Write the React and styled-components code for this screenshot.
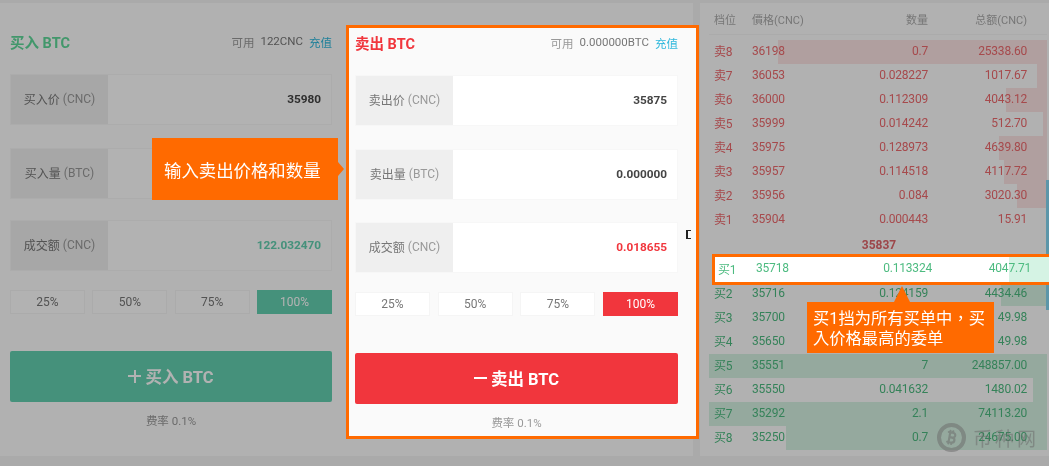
import React from 'react';
import styled, { createGlobalStyle } from 'styled-components';
import { Bitcoin } from 'lucide-react';

const GlobalStyle = createGlobalStyle`
  html, body {
    margin: 0;
    padding: 0;
    background: #f4f4f4;
  }
  * {
    box-sizing: border-box;
  }
`;

const ORANGE = '#ff6a00';
const GREEN = '#64d0b1';
const RED = '#f1363d';
const BUY_TEXT = '#4dbb80';
const SELL_TEXT = '#ee6a6e';

const Page = styled.div`
  position: relative;
  width: 1049px;
  height: 466px;
  overflow: hidden;
  display: flex;
  align-items: flex-start;
  padding-top: 3px;
  background: #f4f4f4;
  font-family: Roboto, "Noto Sans CJK SC", sans-serif;
  font-size: 12px;
  color: #777;
  filter: blur(0.35px);
`;
// the grey tutorial mask, highlighted parts sit above it with z-index
const Mask = styled.div`
  position: absolute;
  inset: 0;
  z-index: 5;
  background: rgba(0, 0, 0, 0.3);
`;
const TradePanel = styled.div`
  flex: none;
  display: flex;
  width: 693px;
  height: 453px;
  background: #fefefe;
`;
const Form = styled.section`
  flex: none;
  display: flex;
  flex-direction: column;
  height: 414px;
  margin-top: 22px;
  width: ${(p) => (p.$active ? '353px' : '346px')};
  padding: ${(p) => (p.$active ? '0 18px 0 6px' : '2px 14px 0 10px')};
  ${(p) =>
    p.$active &&
    `
    position: relative;
    z-index: 6;
    border: 3px solid ${ORANGE};
    background: #fafafa;
  `}
`;
const FormHead = styled.div`
  display: flex;
  align-items: center;
  justify-content: space-between;
  height: 32px;
  padding-bottom: 3px;
  margin-bottom: 15px;
`;
const FormTitle = styled.h2`
  margin: 0;
  font-size: 14.5px;
  font-weight: 700;
  color: ${(p) => p.$color};
`;
const Available = styled.div`
  display: flex;
  gap: 6px;
  font-size: 11.5px;
  color: #999;
`;
const Amount = styled.span`
  color: #777;
`;
const Deposit = styled.a`
  color: #2fb8dc;
`;
const Field = styled.div`
  display: flex;
  height: 51px;
  margin-bottom: ${(p) => p.$gap}px;
  border: 1px solid #f7f7f7;
  background: #fff;
`;
const FieldLabel = styled.div`
  flex: none;
  width: 97px;
  display: flex;
  align-items: center;
  justify-content: center;
  gap: 3px;
  padding-bottom: 2px;
  background: #efefef;
  color: #777;
`;
const Unit = styled.span`
  color: #999;
`;
const FieldValue = styled.div`
  flex: 1;
  display: flex;
  align-items: center;
  justify-content: flex-end;
  padding-right: 10px;
  padding-bottom: 2px;
  font-size: 11.8px;
  font-weight: 700;
  color: ${(p) => p.$color || '#444'};
`;
const Percents = styled.div`
  display: flex;
  justify-content: space-between;
  margin-bottom: 37px;
`;
const Percent = styled.button`
  width: 75px;
  height: 24px;
  padding: 0 0 1px;
  border: 1px solid ${(p) => p.$fill || '#f5f5f5'};
  background: ${(p) => p.$fill || '#fff'};
  color: ${(p) => (p.$fill ? '#fff' : '#777')};
  font: inherit;
`;
const TradeButton = styled.button`
  display: flex;
  align-items: center;
  justify-content: center;
  gap: 4px;
  height: 51px;
  padding: 0 0 1px;
  border: none;
  border-radius: 2px;
  background: ${(p) => p.$fill};
  color: #fff;
  font-family: inherit;
  font-size: 16.5px;
  font-weight: 700;
`;
// plus / minus sign of the trade button
const Sign = styled.span`
  position: relative;
  width: 13px;
  height: 2px;
  background: #fff;
  ${(p) =>
    p.$plus &&
    `
    &::after {
      content: '';
      position: absolute;
      left: 5.5px;
      top: -5.5px;
      width: 2px;
      height: 13px;
      background: #fff;
    }
  `}
`;
const Fee = styled.div`
  margin-top: 10px;
  text-align: center;
  font-size: 11.5px;
  color: #999;
`;
const Stray = styled.span`
  position: absolute;
  z-index: 6;
  left: 686px;
  top: 230px;
  width: 5px;
  height: 9px;
  border: 1px solid #222;
  border-left-width: 2px;
  border-right: none;
`;

const Book = styled.section`
  flex: none;
  width: 349px;
  height: 453px;
  margin-left: 7px;
  padding-left: 9px;
  background: #fefefe;
`;
const BookHead = styled.div`
  display: grid;
  grid-template-columns: 38px 60px 116px 99px;
  align-items: center;
  height: 32px;
  width: 338px;
  padding: 0 20px 0 5px;
  margin-bottom: 5px;
  border-bottom: 1px solid #f5f5f5;
  font-size: 11px;
  color: #aaa;
`;
const Row = styled.div`
  display: grid;
  grid-template-columns: 38px 60px 116px 99px;
  align-items: center;
  height: 24px;
  width: 338px;
  padding: 0 20px 3px 5px;
  letter-spacing: -0.2px;
  color: ${(p) => p.$color};
  background: linear-gradient(to left, ${(p) => p.$tint} ${(p) => p.$bar}px, transparent ${(p) => p.$bar}px);
`;
const BestRow = styled(Row)`
  position: relative;
  z-index: 6;
  width: 341px;
  height: 31px;
  margin: -4px 0 -3px 3px;
  padding: 0 19px 3px 3px;
  border: 3px solid ${ORANGE};
  background-color: #fff;
`;
const Right = styled.span`
  text-align: right;
`;
const LastPrice = styled.div`
  height: 26px;
  line-height: 27px;
  text-align: center;
  font-weight: 700;
  color: #e0666b;
`;
const ScrollThumb = styled.div`
  position: absolute;
  right: 0;
  top: 180px;
  width: 3px;
  height: 130px;
  background: #85d7f2;
`;
const Watermark = styled.div`
  position: absolute;
  left: 937px;
  top: 423px;
  display: flex;
  align-items: center;
  gap: 7px;
  color: rgba(150, 150, 150, 0.5);
`;
const WatermarkCoin = styled.span`
  display: flex;
  align-items: center;
  justify-content: center;
  width: 29px;
  height: 29px;
  border: 4px solid rgba(150, 150, 150, 0.5);
  border-radius: 50%;
`;
const WatermarkName = styled.span`
  font-size: 19px;
  letter-spacing: 3px;
`;

const Callout = styled.div`
  position: absolute;
  z-index: 7;
  background: ${ORANGE};
  color: #fff;
  font-family: Roboto, "Noto Sans CJK TC", sans-serif;
  &::after {
    content: '';
    position: absolute;
  }
`;
const PriceCallout = styled(Callout)`
  left: 152px;
  top: 138px;
  width: 186px;
  height: 62px;
  display: flex;
  align-items: center;
  padding-left: 12px;
  font-family: Roboto, "Noto Sans CJK SC", sans-serif;
  font-size: 17.4px;
  &::after {
    left: 100%;
    top: 24px;
    border-left: 6px solid ${ORANGE};
    border-top: 7px solid transparent;
    border-bottom: 7px solid transparent;
  }
`;
const BestCallout = styled(Callout)`
  left: 807px;
  top: 302px;
  width: 187px;
  height: 51px;
  padding: 7px 6px;
  font-size: 16.3px;
  line-height: 20px;
  &::after {
    left: 87px;
    bottom: 100%;
    border-bottom: 16px solid ${ORANGE};
    border-left: 8px solid transparent;
    border-right: 8px solid transparent;
  }
`;

const asks = [
  ['卖8', '36198', '0.7', '25338.60', 269],
  ['卖7', '36053', '0.028227', '1017.67', 10],
  ['卖6', '36000', '0.112309', '4043.12', 41],
  ['卖5', '35999', '0.014242', '512.70', 4],
  ['卖4', '35975', '0.128973', '4639.80', 48],
  ['卖3', '35957', '0.114518', '4117.72', 43],
  ['卖2', '35956', '0.084', '3020.30', 30],
  ['卖1', '35904', '0.000443', '15.91', 0],
];
const bids = [
  ['买2', '35716', '0.124159', '4434.46', 46],
  ['买3', '35700', '', '49.98', 0],
  ['买4', '35650', '', '49.98', 0],
  ['买5', '35551', '7', '248857.00', 338],
  ['买6', '35550', '0.041632', '1480.02', 14],
  ['买7', '35292', '2.1', '74113.20', 338],
  ['买8', '35250', '0.7', '24675.00', 261],
];

function OrderForm({ active, title, color, fill, amount, labels, values, lastColor, action, plus }) {
  return (
    <Form $active={active}>
      <FormHead>
        <FormTitle $color={color}>{title}</FormTitle>
        <Available>
          可用 <Amount>{amount}</Amount> <Deposit>充值</Deposit>
        </Available>
      </FormHead>
      {labels.map(([label, unit], i) => (
        <Field key={label} $gap={[23, active ? 22 : 21, 19][i]}>
          <FieldLabel>
            {label} <Unit>({unit})</Unit>
          </FieldLabel>
          <FieldValue $color={i === 2 ? lastColor : undefined}>{values[i]}</FieldValue>
        </Field>
      ))}
      <Percents>
        <Percent>25%</Percent>
        <Percent>50%</Percent>
        <Percent>75%</Percent>
        <Percent $fill={fill}>100%</Percent>
      </Percents>
      <TradeButton $fill={fill}>
        <Sign $plus={plus} />
        {action}
      </TradeButton>
      <Fee>费率 0.1%</Fee>
    </Form>
  );
}

export default function App() {
  return (
    <Page>
      <GlobalStyle />
      <TradePanel>
        <OrderForm
          title="买入 BTC"
          color="#5fd99a"
          fill={GREEN}
          amount="122CNC"
          labels={[['买入价', 'CNC'], ['买入量', 'BTC'], ['成交额', 'CNC']]}
          values={['35980', '0.003391', '122.032470']}
          lastColor={GREEN}
          action="买入 BTC"
          plus
        />
        <OrderForm
          active
          title="卖出 BTC"
          color={RED}
          fill={RED}
          amount="0.000000BTC"
          labels={[['卖出价', 'CNC'], ['卖出量', 'BTC'], ['成交额', 'CNC']]}
          values={['35875', '0.000000', '0.018655']}
          lastColor={RED}
          action="卖出 BTC"
        />
      </TradePanel>
      <Stray />
      <Book>
        <BookHead>
          <span>档位</span>
          <span>價格(CNC)</span>
          <Right>数量</Right>
          <Right>总额(CNC)</Right>
        </BookHead>
        {asks.map(([level, price, qty, total, bar]) => (
          <Row key={level} $color={SELL_TEXT} $tint="#fce4e4" $bar={bar}>
            <span>{level}</span>
            <span>{price}</span>
            <Right>{qty}</Right>
            <Right>{total}</Right>
          </Row>
        ))}
        <LastPrice>35837</LastPrice>
        <BestRow $color={BUY_TEXT} $tint="#d5f3e4" $bar={41}>
          <span>买1</span>
          <span>35718</span>
          <Right>0.113324</Right>
          <Right>4047.71</Right>
        </BestRow>
        {bids.map(([level, price, qty, total, bar]) => (
          <Row key={level} $color={BUY_TEXT} $tint="#d6f2e3" $bar={bar}>
            <span>{level}</span>
            <span>{price}</span>
            <Right>{qty}</Right>
            <Right>{total}</Right>
          </Row>
        ))}
      </Book>
      <ScrollThumb />
      <Watermark>
        <WatermarkCoin>
          <Bitcoin size={17} strokeWidth={3} />
        </WatermarkCoin>
        <WatermarkName>币种网</WatermarkName>
      </Watermark>
      <Mask />
      <PriceCallout>输入卖出价格和数量</PriceCallout>
      <BestCallout>买1挡为所有买单中，买入价格最高的委单</BestCallout>
    </Page>
  );
}
